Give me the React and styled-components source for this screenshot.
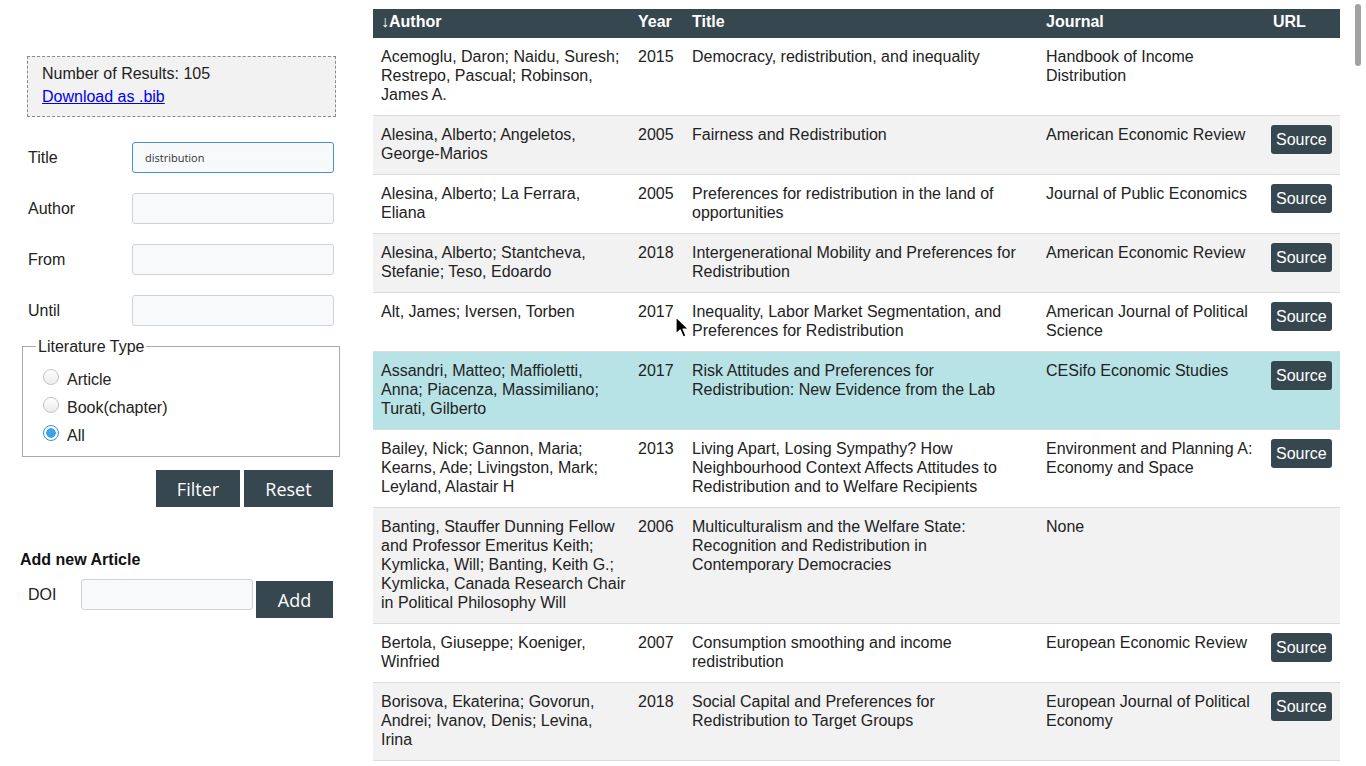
import React from 'react';
import styled, { createGlobalStyle } from 'styled-components';

const GlobalStyle = createGlobalStyle`
  html, body {
    margin: 0;
    padding: 0;
    overflow: hidden;
    background: #fff;
    font-family: 'Liberation Sans', Arial, sans-serif;
    color: #222;
  }
  * {
    box-sizing: border-box;
  }
`;

const rows = [
  {
    author: 'Acemoglu, Daron; Naidu, Suresh; Restrepo, Pascual; Robinson, James A.',
    year: 2015,
    title: 'Democracy, redistribution, and inequality',
    journal: 'Handbook of Income Distribution',
    source: false,
  },
  {
    author: 'Alesina, Alberto; Angeletos, George-Marios',
    year: 2005,
    title: 'Fairness and Redistribution',
    journal: 'American Economic Review',
    source: true,
  },
  {
    author: 'Alesina, Alberto; La Ferrara, Eliana',
    year: 2005,
    title: 'Preferences for redistribution in the land of opportunities',
    journal: 'Journal of Public Economics',
    source: true,
  },
  {
    author: 'Alesina, Alberto; Stantcheva, Stefanie; Teso, Edoardo',
    year: 2018,
    title: 'Intergenerational Mobility and Preferences for Redistribution',
    journal: 'American Economic Review',
    source: true,
  },
  {
    author: 'Alt, James; Iversen, Torben',
    year: 2017,
    title: 'Inequality, Labor Market Segmentation, and Preferences for Redistribution',
    journal: 'American Journal of Political Science',
    source: true,
  },
  {
    author: 'Assandri, Matteo; Maffioletti, Anna; Piacenza, Massimiliano; Turati, Gilberto',
    year: 2017,
    title: 'Risk Attitudes and Preferences for Redistribution: New Evidence from the Lab',
    journal: 'CESifo Economic Studies',
    source: true,
    hover: true,
  },
  {
    author: 'Bailey, Nick; Gannon, Maria; Kearns, Ade; Livingston, Mark; Leyland, Alastair H',
    year: 2013,
    title: 'Living Apart, Losing Sympathy? How Neighbourhood Context Affects Attitudes to Redistribution and to Welfare Recipients',
    journal: 'Environment and Planning A: Economy and Space',
    source: true,
  },
  {
    author: 'Banting, Stauffer Dunning Fellow and Professor Emeritus Keith; Kymlicka, Will; Banting, Keith G.; Kymlicka, Canada Research Chair in Political Philosophy Will',
    year: 2006,
    title: 'Multiculturalism and the Welfare State: Recognition and Redistribution in Contemporary Democracies',
    journal: 'None',
    source: false,
  },
  {
    author: 'Bertola, Giuseppe; Koeniger, Winfried',
    year: 2007,
    title: 'Consumption smoothing and income redistribution',
    journal: 'European Economic Review',
    source: true,
  },
  {
    author: 'Borisova, Ekaterina; Govorun, Andrei; Ivanov, Denis; Levina, Irina',
    year: 2018,
    title: 'Social Capital and Preferences for Redistribution to Target Groups',
    journal: 'European Journal of Political Economy',
    source: true,
  },
];

function App() {
  return (
    <>
      <GlobalStyle />
      <Page>
        <Sidebar>
          <ResultsBox>
            <div>Number of Results: 105</div>
            <a href="#bib">Download as .bib</a>
          </ResultsBox>

          <FormRow>
            <Label>Title</Label>
            <Input defaultValue="distribution" $focused />
          </FormRow>
          <FormRow>
            <Label>Author</Label>
            <Input />
          </FormRow>
          <FormRow>
            <Label>From</Label>
            <Input />
          </FormRow>
          <FormRow>
            <Label>Until</Label>
            <Input />
          </FormRow>

          <TypeSet>
            <legend>Literature Type</legend>
            <Option>
              <Radio type="radio" name="type" />
              Article
            </Option>
            <Option>
              <Radio type="radio" name="type" />
              Book(chapter)
            </Option>
            <Option>
              <Radio type="radio" name="type" defaultChecked />
              All
            </Option>
          </TypeSet>

          <ButtonRow>
            <DarkButton $width={84}>Filter</DarkButton>
            <DarkButton $width={89}>Reset</DarkButton>
          </ButtonRow>

          <Heading>Add new Article</Heading>
          <DoiRow>
            <DoiLabel>DOI</DoiLabel>
            <DoiInput />
            <DarkButton $width={77} $offset={2}>Add</DarkButton>
          </DoiRow>
        </Sidebar>

        <Main>
          <Table>
            <colgroup>
              <col style={{ width: 257 }} />
              <col style={{ width: 54 }} />
              <col style={{ width: 354 }} />
              <col style={{ width: 227 }} />
              <col style={{ width: 75 }} />
            </colgroup>
            <thead>
              <tr>
                <Th>↓Author</Th>
                <Th>Year</Th>
                <Th>Title</Th>
                <Th>Journal</Th>
                <Th>URL</Th>
              </tr>
            </thead>
            <tbody>
              {rows.map((r, i) => (
                <Row key={i} $hover={r.hover}>
                  <AuthorCell>{r.author}</AuthorCell>
                  <Td>{r.year}</Td>
                  <Td>{r.title}</Td>
                  <Td>{r.journal}</Td>
                  <UrlCell>{r.source && <SourceButton>Source</SourceButton>}</UrlCell>
                </Row>
              ))}
            </tbody>
          </Table>
        </Main>
      </Page>

      <ScrollThumb />
      <Pointer width="16" height="24" viewBox="0 0 16 24">
        <path
          d="M1 1 L1 18 L5.2 14 L8.2 21 L11 19.8 L8 13 L13.5 13 Z"
          fill="#000"
          stroke="#fff"
          strokeWidth="1.2"
          strokeLinejoin="round"
        />
      </Pointer>
    </>
  );
}

const Page = styled.div`
  display: flex;
  align-items: flex-start;
`;

const Sidebar = styled.aside`
  width: 345px;
  flex-shrink: 0;
  padding: 56px 0 0 20px;
  font-size: 16px;
`;

const ResultsBox = styled.div`
  width: 309px;
  margin-left: 7px;
  padding: 5px 14px 8px;
  background: #f2f2f2;
  border: 1px dashed #8a8a8a;
  line-height: 23px;
  margin-bottom: 25px;
  a {
    color: #0000ee;
  }
`;

const FormRow = styled.div`
  display: flex;
  align-items: center;
  margin-left: 8px;
  height: 31px;
  margin-bottom: 20px;
`;

const Label = styled.label`
  width: 104px;
`;

const Input = styled.input`
  width: 202px;
  height: 31px;
  padding: 0 12px;
  border: 1px solid ${(p) => (p.$focused ? '#4a90d9' : '#cfd3d8')};
  border-radius: 3px;
  background: #f8f9fb;
  font-family: 'Open Sans', sans-serif;
  font-size: 11px;
  color: #333;
  outline: none;
`;

const TypeSet = styled.fieldset`
  width: 318px;
  margin: -9px 0 0 2px;
  padding: 8px 0 8px 13px;
  border: 1px solid #a9a9a9;
  legend {
    padding: 0 2px;
    line-height: 19px;
  }
`;

const Option = styled.label`
  display: flex;
  align-items: center;
  height: 28px;
  padding-top: 3px;
`;

const Radio = styled.input`
  appearance: none;
  width: 16px;
  height: 16px;
  margin: -5px 8px 0 7px;
  border-radius: 50%;
  border: 1px solid #c4c4c4;
  background: linear-gradient(#fdfdfd, #ececec);
  &:checked {
    border: 1px solid #2d95e5;
    background: radial-gradient(circle, #3aa3ec 0 4.5px, #fff 5px);
  }
`;

const ButtonRow = styled.div`
  display: flex;
  justify-content: flex-end;
  gap: 4px;
  width: 313px;
  margin-top: 13px;
`;

const DarkButton = styled.button`
  width: ${(p) => p.$width}px;
  height: 37px;
  margin-top: ${(p) => p.$offset || 0}px;
  padding: 0;
  border: none;
  background: #37474f;
  color: #fff;
  font-family: 'Open Sans', sans-serif;
  font-size: 18px;
`;

const Heading = styled.h3`
  margin: 43px 0 10px;
  font-size: 16px;
  line-height: 19px;
  font-weight: bold;
  color: #111;
`;

const DoiRow = styled.div`
  display: flex;
  align-items: flex-start;
  margin-left: 8px;
`;

const DoiLabel = styled.label`
  width: 53px;
  line-height: 31px;
`;

const DoiInput = styled.input`
  width: 172px;
  height: 31px;
  margin-right: 3px;
  border: 1px solid #cfd3d8;
  border-radius: 3px;
  background: #f8f9fb;
  outline: none;
`;

const Main = styled.main`
  padding: 9px 0 0 28px;
`;

const Table = styled.table`
  width: 967px;
  table-layout: fixed;
  border-collapse: collapse;
  font-size: 16px;
  line-height: 19px;
`;

const Th = styled.th`
  background: #37474f;
  color: #fff;
  text-align: left;
  font-weight: bold;
  padding: 3px 8px 7px;
`;

const Row = styled.tr`
  background: #fff;
  &:nth-child(even) {
    background: #f2f2f2;
  }
  && {
    background: ${(p) => (p.$hover ? '#b7e2e6' : undefined)};
  }
`;

const Td = styled.td`
  vertical-align: top;
  padding: 9px 8px 11px;
  border-bottom: 1px solid #dcdcdc;
  color: #222;
`;

const AuthorCell = styled(Td)`
  padding-right: 3px;
`;

const UrlCell = styled(Td)`
  padding-left: 6px;
  padding-right: 2px;
`;

const SourceButton = styled.button`
  padding: 5px 5px;
  border: none;
  border-radius: 3px;
  background: #37474f;
  color: #fff;
  font-family: 'Liberation Sans', Arial, sans-serif;
  font-size: 16px;
  line-height: 19px;
`;

const ScrollThumb = styled.div`
  position: fixed;
  top: 4px;
  left: 1355px;
  width: 6px;
  height: 62px;
  border-radius: 3px;
  background: #a2a2a2;
`;

const Pointer = styled.svg`
  position: fixed;
  left: 675px;
  top: 316px;
`;

export default App;
